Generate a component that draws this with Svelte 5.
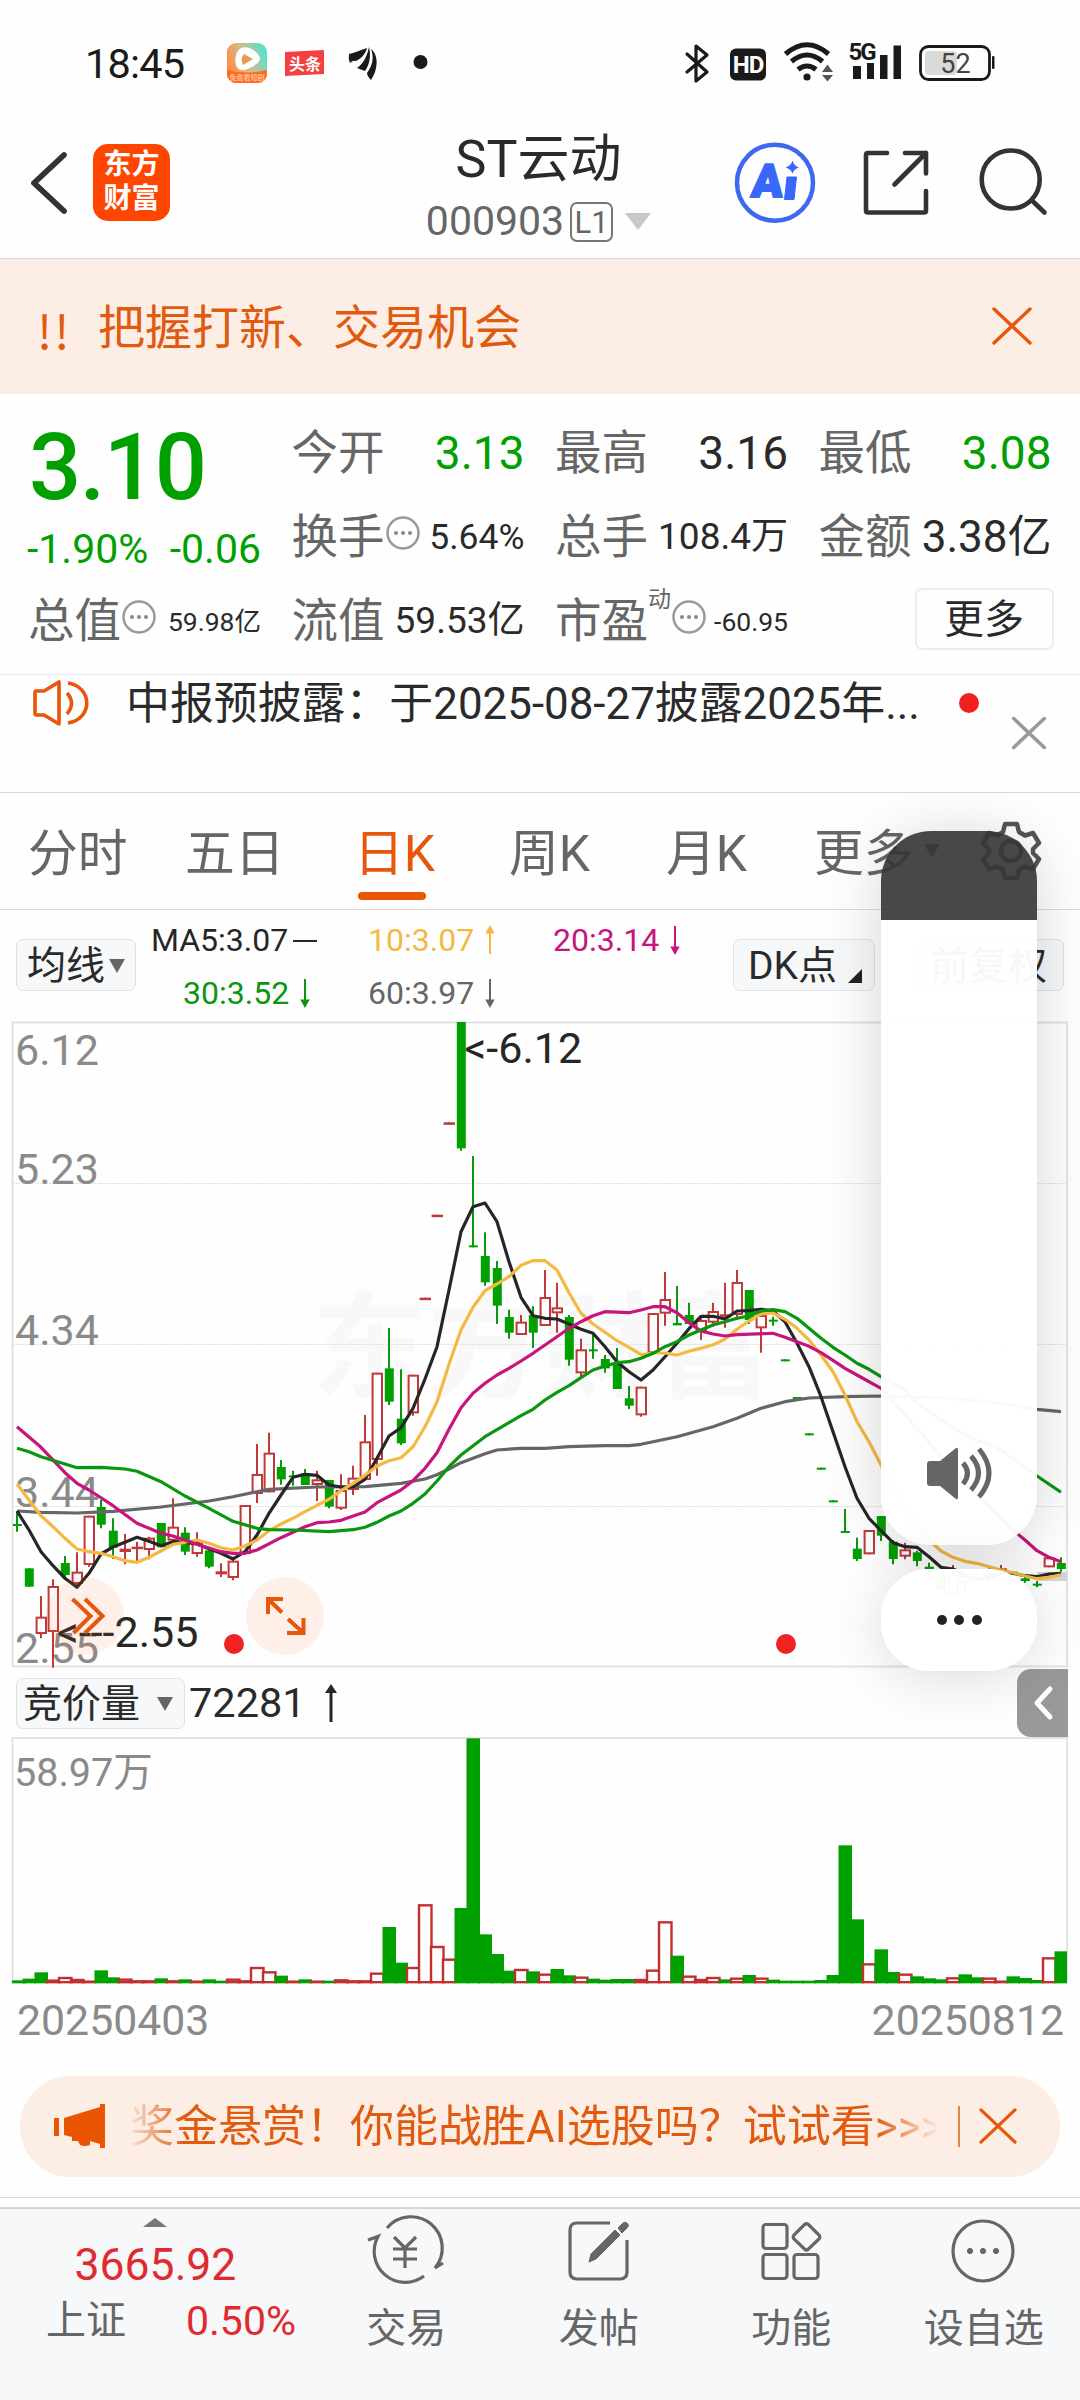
<script>
  // Horizontal slot of one trading day.
  const cx = (i) => 17 + 12 * i;
  // Price axis: data is stored in thirds of a pixel.
  const py = (v) => 1010 + v / 3;
  const vy = (v) => 1720 + v / 3;

  // [high, body top, body bottom, low, up?]
  const candles = [
    [1505, 1542, 1547, 1565, 0], [1675, 1675, 1730, 1730, 0], [1758, 1820, 1872, 1885, 1], [1708, 1728, 1866, 1973, 1],
    [1638, 1659, 1695, 1710, 0], [1627, 1685, 1722, 1735, 1], [1517, 1517, 1665, 1670, 1], [1470, 1491, 1544, 1555, 0],
    [1525, 1562, 1613, 1647, 0], [1572, 1616, 1626, 1663, 1], [1595, 1610, 1613, 1653, 1], [1580, 1583, 1620, 1648, 1],
    [1539, 1539, 1612, 1612, 0], [1465, 1550, 1592, 1595, 1], [1552, 1568, 1625, 1635, 0], [1567, 1595, 1632, 1640, 1],
    [1616, 1621, 1670, 1675, 0], [1660, 1684, 1693, 1701, 1], [1640, 1652, 1704, 1711, 1], [1485, 1485, 1632, 1632, 1],
    [1302, 1392, 1452, 1479, 1], [1268, 1328, 1447, 1447, 1], [1350, 1371, 1408, 1424, 0], [1382, 1396, 1401, 1427, 0],
    [1377, 1390, 1425, 1425, 0], [1382, 1408, 1425, 1473, 1], [1410, 1410, 1490, 1495, 0], [1393, 1440, 1496, 1500, 1],
    [1367, 1403, 1440, 1455, 1], [1215, 1294, 1410, 1410, 1], [1088, 1088, 1350, 1397, 1], [954, 1075, 1175, 1185, 0],
    [1078, 1226, 1300, 1305, 0], [1094, 1094, 1210, 1217, 1], [863, 863, 869, 869, 1], [614, 614, 620, 620, 1],
    [337, 337, 343, 343, 1], [36, 36, 415, 422, 0], [438, 706, 712, 712, 0], [667, 738, 817, 827, 0],
    [753, 774, 887, 942, 0], [899, 921, 968, 986, 0], [915, 935, 975, 975, 1], [889, 915, 968, 1014, 0],
    [780, 861, 948, 948, 1], [818, 892, 910, 968, 1], [915, 921, 1049, 1067, 0], [986, 1018, 1090, 1098, 1],
    [975, 1018, 1023, 1046, 0], [1035, 1047, 1075, 1088, 0], [1014, 1058, 1137, 1137, 0], [1128, 1165, 1187, 1197, 0],
    [1130, 1130, 1216, 1220, 1], [909, 909, 1030, 1030, 1], [786, 867, 911, 947, 1], [828, 939, 946, 946, 0],
    [878, 915, 942, 942, 0], [925, 930, 965, 990, 1], [878, 903, 938, 950, 1], [818, 913, 918, 953, 1],
    [780, 816, 915, 930, 1], [840, 840, 930, 942, 0], [905, 915, 955, 1028, 1], [920, 929, 934, 947, 0],
    [1048, 1048, 1054, 1054, 0], [1161, 1161, 1167, 1167, 0], [1270, 1270, 1276, 1276, 0], [1373, 1373, 1379, 1379, 0],
    [1471, 1471, 1477, 1477, 0], [1497, 1563, 1569, 1569, 0], [1583, 1616, 1647, 1653, 0], [1560, 1560, 1633, 1633, 1],
    [1518, 1518, 1577, 1593, 0], [1590, 1595, 1647, 1663, 0], [1598, 1618, 1640, 1648, 1], [1622, 1627, 1653, 1669, 0],
    [1658, 1670, 1678, 1700, 0], [1695, 1695, 1740, 1740, 0], [1665, 1695, 1753, 1753, 1], [1690, 1695, 1720, 1740, 1],
    [1688, 1700, 1710, 1715, 0], [1675, 1690, 1700, 1720, 1], [1665, 1675, 1680, 1680, 1], [1685, 1685, 1695, 1695, 0],
    [1695, 1705, 1713, 1718, 0], [1713, 1721, 1725, 1732, 0], [1642, 1642, 1672, 1672, 1], [1642, 1659, 1677, 1685, 0]
  ];

  // Moving averages as [day, value] pairs.
  const ma60 = [[0, 1503], [2, 1507], [5, 1509], [8, 1504], [12, 1491], [16, 1473], [18, 1460], [21, 1438], [25, 1431], [29, 1430], [32, 1420], [34, 1407], [35, 1394], [36, 1377], [37, 1358], [39, 1331], [40, 1320], [42, 1315], [44, 1315], [46, 1310], [49, 1307], [51, 1307], [52, 1303], [55, 1280], [58, 1250], [60, 1225], [62, 1195], [64, 1175], [66, 1164], [69, 1160], [72, 1158], [78, 1165], [82, 1180], [85, 1198], [87, 1205]];
  const ma30 = [[0, 1315], [1, 1325], [2, 1340], [4, 1362], [5, 1373], [7, 1372], [9, 1377], [10, 1384], [12, 1415], [14, 1458], [16, 1495], [18, 1534], [20, 1555], [21, 1559], [23, 1560], [26, 1565], [28, 1559], [29, 1552], [30, 1537], [31, 1518], [32, 1503], [33, 1480], [34, 1452], [35, 1413], [36, 1370], [37, 1335], [39, 1280], [41, 1238], [42, 1217], [43, 1198], [44, 1170], [45, 1147], [46, 1127], [47, 1103], [48, 1080], [49, 1068], [50, 1058], [51, 1055], [52, 1045], [53, 1030], [54, 1010], [55, 995], [56, 975], [57, 960], [58, 945], [59, 935], [60, 925], [61, 918], [62, 903], [63, 899], [64, 905], [65, 925], [66, 955], [67, 985], [68, 1012], [69, 1035], [70, 1060], [71, 1078], [72, 1100], [74, 1140], [75, 1180], [77, 1230], [79, 1275], [82, 1320], [85, 1398], [87, 1447]];
  const ma20 = [[0, 1250], [2, 1312], [4, 1388], [5, 1420], [6, 1440], [8, 1487], [10, 1540], [12, 1570], [13, 1578], [15, 1603], [17, 1625], [18, 1630], [19, 1630], [20, 1620], [22, 1583], [24, 1550], [25, 1538], [26, 1536], [27, 1531], [29, 1506], [30, 1478], [32, 1440], [33, 1412], [34, 1375], [35, 1328], [36, 1258], [37, 1193], [38, 1150], [39, 1120], [40, 1095], [41, 1075], [42, 1053], [43, 1030], [44, 1005], [45, 980], [46, 955], [47, 935], [48, 917], [49, 905], [51, 908], [52, 900], [53, 890], [54, 890], [55, 908], [56, 938], [57, 963], [58, 972], [59, 978], [60, 974], [63, 970], [64, 982], [65, 995], [66, 1009], [67, 1028], [68, 1051], [69, 1075], [70, 1095], [72, 1135], [74, 1215], [75, 1255], [77, 1340], [79, 1420], [81, 1490], [83, 1560], [84, 1590], [85, 1622], [86, 1642], [87, 1655]];
  const ma10 = [1422, 1470, 1517, 1550, 1585, 1617, 1625, 1630, 1640, 1652, 1657, 1642, 1623, 1603, 1597, 1590, 1600, 1613, 1620, 1608, 1590, 1562, 1542, 1525, 1505, 1486, 1468, 1442, 1420, 1396, 1368, 1352, 1343, 1310, 1250, 1175, 1063, 960, 892, 842, 822, 800, 766, 752, 752, 780, 848, 910, 942, 967, 992, 1012, 1034, 1029, 1029, 1035, 1024, 1015, 1004, 988, 958, 933, 912, 909, 928, 955, 990, 1035, 1085, 1155, 1235, 1295, 1365, 1440, 1500, 1550, 1590, 1623, 1642, 1654, 1660, 1670, 1680, 1688, 1698, 1706, 1702, 1694].map((v, i) => [i, v]);
  const ma5 = [1503, 1560, 1625, 1667, 1705, 1732, 1690, 1632, 1611, 1597, 1582, 1594, 1607, 1595, 1597, 1602, 1616, 1630, 1647, 1625, 1575, 1510, 1455, 1402, 1393, 1396, 1425, 1431, 1431, 1408, 1345, 1278, 1253, 1195, 1107, 1010, 840, 665, 590, 579, 635, 755, 862, 917, 925, 927, 942, 958, 970, 1010, 1055, 1085, 1110, 1080, 1040, 1000, 956, 919, 919, 927, 903, 902, 898, 903, 935, 1000, 1070, 1160, 1265, 1370, 1465, 1525, 1562, 1598, 1610, 1612, 1640, 1672, 1677, 1695, 1708, 1705, 1690, 1690, 1697, 1700, 1692, 1690].map((v, i) => [i, v]);

  const points = (line) => line.map(([i, v]) => `${cx(i)},${py(v).toFixed(1)}`).join(' ');

  const averages = [
    { name: 'ma60', pts: points(ma60) },
    { name: 'ma5', pts: points(ma5) },
    { name: 'ma10', pts: points(ma10) },
    { name: 'ma20', pts: points(ma20) },
    { name: 'ma30', pts: points(ma30) }
  ];

  // Auction volume, bar tops; days listed in `rises` are drawn hollow.
  const volumes = [781, 776, 757, 779, 771, 777, 782, 751, 772, 776, 781, 781, 775, 781, 778, 782, 778, 782, 776, 781, 741, 754, 767, 782, 778, 782, 782, 778, 781, 781, 758, 621, 728, 741, 553, 678, 716, 564, 55, 643, 702, 752, 747, 754, 761, 747, 766, 770, 776, 779, 777, 777, 777, 749, 604, 707, 767, 777, 771, 778, 773, 765, 773, 779, 782, 782, 782, 780, 765, 376, 598, 730, 688, 756, 761, 769, 775, 778, 772, 763, 772, 773, 782, 769, 774, 780, 712, 694];
  const rises = new Set([3, 4, 5, 6, 9, 10, 11, 13, 15, 18, 19, 20, 21, 23, 25, 27, 28, 29, 30, 33, 34, 35, 36, 42, 44, 47, 52, 53, 54, 56, 57, 58, 60, 62, 71, 74, 78, 81, 82, 86]);

  const axis = [
    ['6.12', 1064.5], ['5.23', 1183.5], ['4.34', 1344.5], ['3.44', 1506.5], ['2.55', 1663]
  ];
  const tabs = ['分时', '五日', '日K', '周K', '月K'];
</script>

{#snippet more()}
  <svg class="dots" viewBox="0 0 34 34"><circle cx="17" cy="17" r="15.5" /><g><circle cx="10" cy="17" r="2" /><circle cx="17" cy="17" r="2" /><circle cx="24" cy="17" r="2" /></g></svg>
{/snippet}

<div class="page">
  <div class="status">
    <span class="time">18:45</span>
    <svg class="tray" viewBox="0 0 200 44">
      <defs>
        <linearGradient id="play" x1="0" y1=".6" x2="1" y2=".2">
          <stop offset="0" stop-color="#ff8a3c" /><stop offset=".45" stop-color="#d9b98a" /><stop offset="1" stop-color="#4fe3cf" />
        </linearGradient>
        <clipPath id="tile"><rect x="0" y="2" width="40" height="40" rx="9" /></clipPath>
      </defs>
      <g clip-path="url(#tile)">
        <rect x="0" y="2" width="40" height="40" fill="url(#play)" />
        <path d="M0 29Q20 34 40 29V42H0Z" fill="#ff6a26" />
        <path d="M14 7C22 4 33 12 33 18C33 22 20 30 14 29C7 28 6 12 14 7Z" fill="#fff" />
        <path d="M17 13L26 18L16 24Q13 18 17 13Z" fill="#e89a50" />
        <text x="20" y="39" class="drama">免费看短剧</text>
      </g>
      <path d="M58 11L97 9V33L58 35Z" fill="#f5403f" />
      <text x="78" y="28.500" class="news">头条</text>
      <g fill="#1a1a1a">
        <path d="M140 7C133 9 127 12 122 13Q121 18 123 22Q126 19 129 20C135 17 139 12 140 7Z" />
        <path d="M142 6C140 15 137 22 130 27Q135 29 138 30C143 23 144 14 142 6Z" />
        <path d="M144 8C147 16 146 24 140 32Q140 35 144 39C151 29 152 14 144 8Z" />
        <circle cx="193.500" cy="21" r="7" />
      </g>
    </svg>
    <svg class="signals" viewBox="660 30 340 60">
      <g fill="none" stroke="#1a1a1a" stroke-width="3.200" stroke-linejoin="round">
        <path d="M687 53L707 71L696 80V45L707 54L687 71" stroke-linecap="round" />
      </g>
      <rect x="730" y="47.500" width="36" height="32" rx="6" fill="#1a1a1a" />
      <text x="748" y="72" class="hd">HD</text>
      <g fill="none" stroke="#1a1a1a" stroke-width="5">
        <path d="M785.500 53Q807 34.500 828.500 53" />
        <path d="M791.500 60.500Q807 47.500 822.500 60.500" />
        <path d="M798 68.500Q807 61.500 816 68.500" />
      </g>
      <circle cx="807" cy="76" r="3.600" fill="#1a1a1a" />
      <path d="M822 71L827.500 63.500L833 71ZM822 74L833 74L827.500 80.500Z" fill="#555" />
      <text x="848.500" y="59" class="net">5G</text>
      <path d="M853 65h8v13h-8zM867 62h7v16h-7zM880 54h7.500v24h-7.500zM893.500 44.500h7.500v33.500h-7.500z" fill="#1a1a1a" />
      <rect x="925" y="50" width="32" height="24" rx="4" fill="#dadada" />
      <rect x="920.500" y="45.500" width="69" height="33" rx="8" fill="none" stroke="#1a1a1a" stroke-width="2.800" />
      <rect x="992" y="55" width="2.500" height="13" rx="1" fill="#1a1a1a" />
      <text x="955.500" y="72" class="charge">52</text>
    </svg>
  </div>

  <header class="header">
    <div class="lead">
      <svg class="back" viewBox="0 0 40 64"><path d="M34 4L4 32L34 60" /></svg>
      <div class="logo"><span>东方</span><span>财富</span></div>
    </div>
    <div class="title">
      <h1>ST云动</h1>
      <div class="code"><span>000903</span><b>L1</b><i></i></div>
    </div>
    <svg class="actions" viewBox="730 140 320 86">
      <circle cx="775" cy="182.700" r="38" fill="none" stroke="#3d68f0" stroke-width="4.500" />
      <text transform="translate(750.500 197) skewX(-5)" class="ai">A</text>
      <path d="M787 177h9.500l-2.500 22.500h-9.500z" fill="#3a67fb" stroke="#3a67fb" stroke-linejoin="round" />
      <path d="M792.500 160.500Q794 166 799 167.500Q794 169 792.500 173.500Q791 169 785.500 167.500Q791 166 792.500 160.500Z" fill="#3a67fb" />
      <g fill="none" stroke="#333" stroke-width="4.600" stroke-linecap="round" stroke-linejoin="round">
        <path d="M887 153H868Q866 153 866 155V210.500Q866 212.500 868 212.500H924Q926 212.500 926 210.500V191" />
        <path d="M905 153H926V173.500M926 153L894.500 184.500" />
        <circle cx="1010.700" cy="179.500" r="29" />
        <path d="M1032 200.500L1044.500 212.500" />
      </g>
    </svg>
  </header>

  <div class="banner">
    <span class="bang">!!</span><span class="msg">把握打新、交易机会</span>
    <svg class="close" viewBox="0 0 40 38"><path d="M2 2L38 36M38 2L2 36" /></svg>
  </div>

  <section class="quote">
    <div class="price">
      <strong>3.10</strong>
      <div class="change"><span>-1.90%</span><span>-0.06</span></div>
    </div>
    <div class="cell"><span>今开</span><em class="big down">3.13</em></div>
    <div class="cell"><span>最高</span><em class="big">3.16</em></div>
    <div class="cell"><span>最低</span><em class="big down">3.08</em></div>
    <div class="cell"><span>换手</span>{@render more()}<em class="mid">5.64%</em></div>
    <div class="cell"><span>总手</span><em class="mid2">108.4万</em></div>
    <div class="cell"><span>金额</span><em class="large">3.38亿</em></div>
    <div class="cell"><span>总值</span>{@render more()}<em class="small">59.98亿</em></div>
    <div class="cell"><span>流值</span><em class="mid2">59.53亿</em></div>
    <div class="cell"><span>市盈</span><sup>动</sup>{@render more()}<em class="small">-60.95</em></div>
    <div class="cell end"><button class="morebtn">更多</button></div>
  </section>

  <div class="notice">
    <svg class="horn" viewBox="0 0 58 48"><path d="M3 12H11L26 3V45L11 36H3Q2 36 2 34V14Q2 12 3 12ZM34 14Q43 24 34 35M35 4C60 8 60 40 35 44" /></svg>
    <span class="news-text">中报预披露：于2025-08-27披露2025年...</span>
    <i class="reddot"></i>
    <svg class="close grey" viewBox="0 0 40 38"><path d="M2 2L38 36M38 2L2 36" /></svg>
  </div>

  <nav class="tabs">
    {#each tabs as tab, i}
      <span class="tab" class:active={i === 2}>{tab}</span>
    {/each}
    <span class="tab">更多<i class="tri"></i></span>
    <svg class="gear" viewBox="-30 -30 60 60">
      <path d="M-6 -27H6L8 -19L14 -15.500L22 -18L28 -8L22 -2V2L28 8L22 18L14 15.500L8 19L6 27H-6L-8 19L-14 15.500L-22 18L-28 8L-22 2V-2L-28 -8L-22 -18L-14 -15.500L-8 -19Z" />
      <circle r="10" />
    </svg>
  </nav>

  <div class="indicators">
    <button class="pill avg">均线<i class="tri"></i></button>
    <div class="mas">
      <span class="c5">MA5:3.07<svg class="arrow wide" viewBox="0 0 24 28"><path d="M0 15H24" /></svg></span>
      <span class="c10">10:3.07<svg class="arrow" viewBox="0 0 12 28"><path d="M6 28V4M6 1L3 6.500H9Z" /></svg></span>
      <span class="c20">20:3.14<svg class="arrow" viewBox="0 0 12 28"><path d="M6 0V24M6 27L3 21.500H9Z" /></svg></span>
      <span class="c30">30:3.52<svg class="arrow" viewBox="0 0 12 28"><path d="M6 0V24M6 27L3 21.500H9Z" /></svg></span>
      <span class="c60">60:3.97<svg class="arrow" viewBox="0 0 12 28"><path d="M6 0V24M6 27L3 21.500H9Z" /></svg></span>
    </div>
    <button class="pill dk">DK点<i class="corner"></i></button>
    <button class="pill adj">前复权</button>
  </div>

  <section class="kline">
    <svg class="plot" viewBox="0 1020 1080 650">
      <text x="312" y="1388" class="mark">东方财富</text>
      <g class="frame"><rect x="12.500" y="1022.500" width="1054.500" height="644" /></g>
      {#each [1183.5, 1344.5, 1506.5] as y}
        <line class="grid" x1="13" x2="1067" y1={y} y2={y} />
      {/each}
      {#each axis as [label, y]}
        <text x="15" {y} class="axis">{label}</text>
      {/each}
      <rect x="1037" y="1572" width="30" height="9" fill="#d3d3da" />
      {#each candles as [h, t, b, l, up], i}
        {#if up}
          <g class="up">
            <line x1={cx(i)} x2={cx(i)} y1={py(h)} y2={py(l)} />
            <rect x={cx(i) - 4.4} y={py(t) + 1} width="9.400" height={Math.max((b - t) / 3 - 2, 0.5)} />
          </g>
        {:else}
          <g class="dn">
            <line x1={cx(i)} x2={cx(i)} y1={py(h)} y2={py(l)} />
            <rect x={cx(i) - 4.2} y={py(t)} width="9" height={Math.max((b - t) / 3, 2)} />
          </g>
        {/if}
      {/each}
      {#each averages as line}
        <polyline class="ma {line.name}" points={line.pts} />
      {/each}
      <text x="464.500" y="1062.500" class="note">&lt;-6.12</text>
      <text x="57" y="1647" class="note">&lt;---2.55</text>
      <g class="float">
        <circle cx="85" cy="1616" r="39" /><circle cx="285" cy="1616" r="39" />
        <path d="M72.500 1599L90.500 1616L73.500 1633M85 1599L102.500 1616L85 1633" />
        <path d="M268 1614V1599H283M268 1599L282 1612.500M303.500 1618V1633H287M303.500 1633L288 1619" />
      </g>
      <circle cx="234" cy="1644" r="10" class="event" /><circle cx="786" cy="1644" r="10" class="event" />
    </svg>
  </section>

  <div class="volbar">
    <button class="pill auction">竞价量<i class="tri"></i></button>
    <span class="auction-val">72281</span>
    <svg class="up-arrow" viewBox="0 0 14 40"><path d="M7 39V8" /><path class="head" d="M7 1L13 10H1Z" /></svg>
    <div class="drawer"><svg viewBox="0 0 18 32"><path d="M16 2L3 16L16 30" /></svg></div>
  </div>

  <section class="volume">
    <svg class="plot" viewBox="0 1737 1080 250">
      <g class="frame"><rect x="12.500" y="1738" width="1054.500" height="244" /></g>
      <text x="14" y="1785.500" class="axis s">58.97万</text>
      {#each volumes as v, i}
        {#if rises.has(i)}
          <rect class="hollow" x={cx(i) - 6} y={vy(v) + 1} width="12.500" height={(788 - v) / 3 - 1.5} />
        {:else}
          <rect class="solid" x={Math.max(cx(i) - 6.5, 12)} y={vy(v)} width={i === 87 ? 12.5 : 13.5} height={(790 - v) / 3} />
        {/if}
      {/each}
    </svg>
  </section>
  <div class="dates"><span>20250403</span><span>20250812</span></div>

  <div class="promo">
    <svg class="mega" viewBox="0 0 52 46"><path d="M0 15h5v18h-5zM10 15L46 4V1H51V45H46V41L36 38V42Q30 44 26 42L24 38H18V34L10 32Z" /></svg>
    <span class="promo-text">奖金悬赏！你能战胜AI选股吗？试试看&gt;&gt;&gt;</span>
    <i class="divider"></i>
    <svg class="close" viewBox="0 0 40 38"><path d="M2 2L38 36M38 2L2 36" /></svg>
  </div>

  <footer class="dock">
    <div class="index">
      <i></i>
      <b>3665.92</b>
      <div><span>上证</span><em>0.50%</em></div>
    </div>
    <div class="item">
      <svg viewBox="0 0 78 70">
        <path d="M21 12A31 31 0 0 1 69 52L77 47M2 24L12 20.500A31 31 0 0 0 58 60" transform="translate(-1 1)" />
        <path d="M27 22L38 33L49 22M26 34H50M26 44H50M38 33V53" />
      </svg><span>交易</span>
    </div>
    <div class="item">
      <svg viewBox="0 0 78 70">
        <path d="M50 8H17Q10 8 10 15V57Q10 64 17 64H60Q67 64 67 57V25" />
        <path class="fill" d="M29 47L31 39L55 15L60 20L36 44ZM58 13L63 8Q66 6 68 9Q69 11 67 13L62 18Z" />
      </svg><span>发帖</span>
    </div>
    <div class="item">
      <svg viewBox="0 0 78 70">
        <rect x="11" y="9.500" width="24" height="24" rx="3" /><rect x="11" y="39.500" width="24" height="24" rx="3" /><rect x="42" y="39.500" width="24" height="24" rx="3" />
        <path d="M52.500 9.500Q54.500 8 56.500 9.500L67 20Q68.500 22 67 24L56.500 34Q54.500 36 52.500 34L42 24Q40.500 22 42 20Z" />
      </svg><span>功能</span>
    </div>
    <div class="item">
      <svg viewBox="0 0 78 70">
        <circle cx="38" cy="36" r="30" />
        <g class="fill"><circle cx="25" cy="36" r="2.600" /><circle cx="38" cy="36" r="2.600" /><circle cx="51" cy="36" r="2.600" /></g>
      </svg><span>设自选</span>
    </div>
  </footer>

  <div class="slider">
    <svg viewBox="0 0 66 54">
      <path class="box" d="M1 17Q1 14 4 14H14L30 1Q32 0 32 3V50Q32 53 30 52L14 39H4Q1 39 1 36Z" />
      <path d="M37 16Q46 26 37 37M45 9Q60 26 45 43M53 2Q73 26 53 50" />
    </svg>
  </div>
  <div class="options"><i></i><i></i><i></i></div>
</div>

<style>
  :global(body) { background: #fefefe; }
  .page {
    position: relative; width: 1080px; height: 2400px; overflow: hidden;
    display: flex; flex-direction: column; background: #fefefe; color: #2a2a2a;
    font-family: Roboto, 'Noto Sans CJK SC', sans-serif; line-height: 1.2; white-space: nowrap;
  }
  .page > * { flex-shrink: 0; box-sizing: border-box; }
  svg { display: block; overflow: visible; }
  em, i { font-style: normal; }
  button { font: inherit; color: inherit; margin: 0; padding: 0; box-sizing: border-box; }

  .status { height: 124px; display: flex; align-items: center; padding: 1px 0 0 85px; }
  .time { width: 142px; font-size: 41.500px; letter-spacing: -.8px; color: #1a1a1a; padding-top: 2px; }
  .tray { width: 200px; height: 44px; }
  .signals { width: 340px; height: 60px; margin: 0 0 4px 233px; }
  .drama { font-size: 7px; fill: #ffe0b0; text-anchor: middle; }
  .news { font-size: 16px; font-weight: 700; fill: #fff; text-anchor: middle; }
  .hd { font-size: 24px; font-weight: 700; fill: #fff; text-anchor: middle; letter-spacing: -1px; }
  .net { font-size: 24px; font-weight: 700; fill: #1a1a1a; letter-spacing: -2px; }
  .charge { font-size: 27px; fill: #444; text-anchor: middle; }

  .header { height: 135px; padding: 4px 30px 0; display: grid; grid-template-columns: 1fr auto 1fr; border-bottom: 1.5px solid #ddd6d2; }
  .lead { display: flex; align-items: center; height: 110px; gap: 24px; }
  .back { width: 40px; height: 64px; fill: none; stroke: #333; stroke-width: 5.8; stroke-linecap: round; stroke-linejoin: round; margin-right: -1px; }
  .logo {
    width: 77px; height: 77px; border-radius: 15px; background: #ff4600; color: #fff;
    display: flex; flex-direction: column; align-items: center; justify-content: center;
    font-size: 28px; font-weight: 700; line-height: 34px; box-sizing: border-box;
    margin-bottom: 2px;
  }
  .title { display: flex; flex-direction: column; align-items: center; margin-left: -3px; }
  h1 { margin: 1px 0 0; font-size: 52px; font-weight: 400; line-height: 62px; color: #2a2a2a; }
  .code { margin-top: 6px; display: flex; align-items: center; font-size: 41px; color: #666; height: 49px; }
  .code b { box-sizing: border-box; width: 43px; height: 40px; margin-left: 6px; border: 2px solid #777; border-radius: 7px; font-size: 31px; font-weight: 400; line-height: 37px; text-align: center; }
  .code i { margin-left: 12px; border: 13px solid transparent; border-top: 17px solid #c8c8c8; border-bottom: 0; }
  .actions { justify-self: end; width: 320px; height: 86px; margin: 12px 0 0; }
  .ai { font-size: 46px; font-weight: 900; fill: #3a67fb; stroke: #3a67fb; stroke-width: 2; stroke-linejoin: round; }

  .banner { height: 135px; padding: 4px 48px 0 37px; display: flex; align-items: center; background: #fceee5; color: #e05a10; font-size: 47px; }
  .bang { width: 61px; font-family: 'Noto Sans CJK SC', sans-serif; letter-spacing: 2px; line-height: 56px; }
  .msg { flex: 1; }
  .close { width: 40px; height: 38px; fill: none; stroke: #e8560c; stroke-width: 3.4; stroke-linecap: round; }
  .banner .close { margin-bottom: 6px; }

  .quote {
    height: 280.5px; padding: 17px 30px 0 28px; border-bottom: 1px solid #ececec;
    display: grid; grid-template-columns: repeat(4, 233px); grid-template-rows: repeat(3, 84px); column-gap: 30.500px;
  }
  .price { grid-row: span 2; color: #00a000; display: flex; flex-direction: column; }
  .price strong { font-size: 92px; font-weight: 500; line-height: 112px; margin: 1px 0 0 1px; letter-spacing: -1.5px; }
  .change { display: flex; justify-content: space-between; font-size: 41px; line-height: 50px; margin-left: -1px; }
  .cell { display: flex; align-items: center; color: #666; font-size: 46.500px; padding-top: 1px; box-sizing: border-box; }
  .cell em { margin-left: auto; color: #2a2a2a; }
  .cell .big { font-size: 46px; }
  .cell .large { font-size: 44px; }
  .cell .mid { font-size: 35.500px; }
  .cell .mid2 { font-size: 37px; }
  .cell .small { font-size: 26.500px; }
  .cell .down { color: #00a000; }
  .cell sup { font-size: 23px; line-height: 28px; align-self: flex-start; margin-top: 6px; }
  .cell.end { justify-content: flex-end; }
  .dots { width: 34px; height: 34px; margin: 0 0 10px 1px; fill: none; stroke: #999; stroke-width: 2.5; }
  .dots g { fill: #888; stroke: none; }
  .morebtn { width: 139px; height: 62px; border: 2px solid #ececee; border-radius: 7px; background: none; font-size: 40px; margin: 0 -2px 6px 0; padding-top: 2px; color: #2a2a2a; }

  .notice { height: 118px; display: flex; align-items: flex-start; padding: 0 33px; border-bottom: 1.5px solid #dadada; font-size: 43.900px; }
  .horn { width: 58px; height: 48px; margin-top: 4px; fill: none; stroke: #e8560c; stroke-width: 3.6; stroke-linejoin: round; }
  .news-text { margin-left: 35px; line-height: 59px; width: 833px; }
  .reddot { width: 20px; height: 20px; border-radius: 50%; background: #f02020; margin-top: 18px; }
  .grey { width: 34px; height: 34px; margin: 41px 1px 0 auto; stroke: #999; stroke-width: 4.2; }

  .tabs { height: 117px; padding: 23px 0 0 28px; display: grid; grid-template-columns: 157px 169px 155px 157px 148px 167px auto; align-items: start; border-bottom: 1.5px solid #dadada; font-size: 49.800px; color: #666; }
  .tab { line-height: 76px; display: flex; align-items: center; }
  .tab.active { color: #e8560c; flex-direction: column; align-items: flex-start; }
  .tab.active::after { content: ''; width: 68px; height: 8px; border-radius: 4px; background: #ea5504; margin: 0 0 0 4px; }
  .tri { border: 8.500px solid transparent; border-top: 14px solid #666; border-bottom: 0; }
  .tab .tri { margin-left: 10px; margin-bottom: 6px; flex-shrink: 0; }
  .gear { width: 60px; height: 60px; margin-top: 5px; fill: none; stroke: #555; stroke-width: 4.5; stroke-linejoin: round; }

  .indicators { height: 110px; display: flex; align-items: flex-start; padding-left: 16px; }
  .pill { border: 1.5px solid #dfe1e8; border-radius: 7px; background: #f7f8fa; font-size: 39px; height: 52px; line-height: 50px; padding-top: 2px; display: flex; align-items: center; }
  .avg { width: 120px; margin-top: 29px; padding-left: 10px; }
  .avg .tri { margin-left: 4px; }
  .mas { width: 583px; margin: 11px 0 0 14px; display: grid; grid-template-columns: 217px 185px auto; row-gap: 15px; font-size: 32px; line-height: 38px; padding-left: 1px; box-sizing: border-box; }
  .mas span { display: flex; align-items: center; }
  .arrow { width: 12px; height: 28px; margin-left: 10px; stroke: currentColor; fill: currentColor; stroke-width: 2; }
  .arrow.wide { width: 24px; margin-left: 5px; }
  .c5 { color: #262626; } .c10 { color: #f5b942; } .c20 { color: #c8147d; } .c30 { color: #0a960f; margin-left: 32px; } .c60 { color: #666; }
  .dk { width: 142px; margin-top: 29px; padding-left: 14px; }
  .corner { align-self: flex-end; margin: 0 0 7px 11px; border-left: 14px solid transparent; border-bottom: 14px solid #222; }
  .adj { width: 148px; margin: 29px 0 0 41px; padding-left: 13px; }

  .kline { height: 650px; }
  .plot { width: 1080px; height: 100%; }
  .frame rect { fill: none; stroke: #e0e0e0; stroke-width: 1.8; }
  .grid { stroke: #e0e0e0; stroke-width: 1; stroke-dasharray: 2 1; }
  .axis { font-size: 43px; fill: #8a8a8a; }
  .axis.s { font-size: 39.500px; }
  .mark { font-size: 115px; font-weight: 700; fill: #f8f8f8; }
  .note { font-size: 43px; fill: #262626; }
  .up line, .up rect { stroke: #c03838; stroke-width: 2; fill: #fefefe; }
  .dn line { stroke: #0a960f; stroke-width: 2; }
  .dn rect { fill: #00a000; }
  .ma { fill: none; stroke-width: 3.2; stroke-linejoin: round; }
  .ma5 { stroke: #262626; } .ma10 { stroke: #f5b942; } .ma20 { stroke: #c8147d; } .ma30 { stroke: #0a960f; } .ma60 { stroke: #666; }
  .float circle { fill: #ff732d; fill-opacity: .1; }
  .float path { fill: none; stroke: #e8560c; stroke-width: 4; }
  .event { fill: #f02222; }

  .volbar { height: 67px; display: flex; align-items: flex-start; padding-left: 16px; }
  .auction { width: 169px; height: 51px; margin-top: 8px; padding-left: 6px; }
  .auction .tri { margin-left: 17px; }
  .auction-val { margin: 7px 0 0 4px; font-size: 41.500px; line-height: 51px; width: 132px; }
  .up-arrow { width: 14px; height: 40px; margin: 13px auto 0 3px; stroke: #262626; stroke-width: 3; }
  .up-arrow .head { fill: #262626; stroke: none; }
  .drawer { width: 51px; height: 68px; margin: -1px 12px 0 0; border-radius: 14px 0 0 14px; background: #999; display: flex; align-items: center; justify-content: center; }
  .drawer svg { width: 18px; height: 32px; fill: none; stroke: #fff; stroke-width: 5; stroke-linecap: round; stroke-linejoin: round; }

  .volume { height: 250px; }
  .solid { fill: #00a000; }
  .hollow { fill: #fefefe; stroke: #c03030; stroke-width: 2.4; }
  .dates { height: 89px; display: flex; justify-content: space-between; padding: 8px 16px 0 17px; font-size: 42.800px; color: #8a8a8a; }

  .promo { width: 1040px; height: 101px; margin: 0 20px; padding: 0 43px 0 34px; border-radius: 50px; background: #fceee5; display: flex; align-items: center; color: #e05a10; }
  .mega { width: 52px; height: 46px; fill: #ea5504; }
  .promo-text {
    width: 814px; margin: 3px 0 0 19px; padding-left: 5px; box-sizing: border-box; font-size: 44px;
    mask-image: linear-gradient(90deg, transparent, #000 60px, #000 750px, transparent);
  }
  .divider { width: 2px; height: 41px; margin: 0 auto; background: #e8823c; }
  .promo .close { width: 38px; height: 36px; }

  .dock { height: 204px; margin-top: 20px; padding-top: 10px; display: flex; border-top: 1.5px solid #d8d8d8; background: linear-gradient(#fefefe 9px, #d4d5d8 9px, #d4d5d8 10.500px, #f7f8fa 10.500px); color: #666; }
  .index { width: 310px; display: flex; flex-direction: column; align-items: center; }
  .index i { border: 12px solid transparent; border-bottom: 9px solid #777; border-top: 0; margin-top: 10px; }
  .index b { margin: 12px 0 0 1px; font-size: 44.500px; font-weight: 400; line-height: 53px; color: #e02a30; }
  .index div { display: flex; align-items: center; gap: 38px; font-size: 40px; margin-top: 5px; margin-left: 32px; align-self: stretch; padding-left: 14px; }
  .index em { font-size: 41px; color: #e02a30; margin-left: 22px; }
  .item { width: 192.500px; display: flex; flex-direction: column; align-items: center; font-size: 40px; }
  .item svg { width: 78px; height: 70px; margin-top: 7px; fill: none; stroke: #666; stroke-width: 3.2; }
  .item .fill { fill: #666; stroke-width: 1; }
  .item span { margin-top: 20px; }

  .slider {
    position: absolute; left: 881px; top: 831px; width: 156px; height: 714px; border-radius: 50px;
    background: linear-gradient(rgba(54, 54, 54, .91) 89px, rgba(255, 255, 255, .965) 89px);
    box-shadow: 0 6px 60px rgba(0, 0, 0, .16); overflow: hidden;
  }
  .slider svg { width: 66px; height: 54px; margin: 616px 0 0 45px; fill: none; stroke: #666; stroke-width: 5; }
  .slider .box { fill: #666; stroke: none; }
  .options {
    position: absolute; left: 881px; top: 1569px; width: 156px; height: 102px; border-radius: 48px;
    background: rgba(255, 255, 255, .965); box-shadow: 0 6px 60px rgba(0, 0, 0, .14);
    display: flex; align-items: center; justify-content: center; gap: 7.500px;
  }
  .options i { width: 10px; height: 10px; border-radius: 50%; background: #222; }
</style>
